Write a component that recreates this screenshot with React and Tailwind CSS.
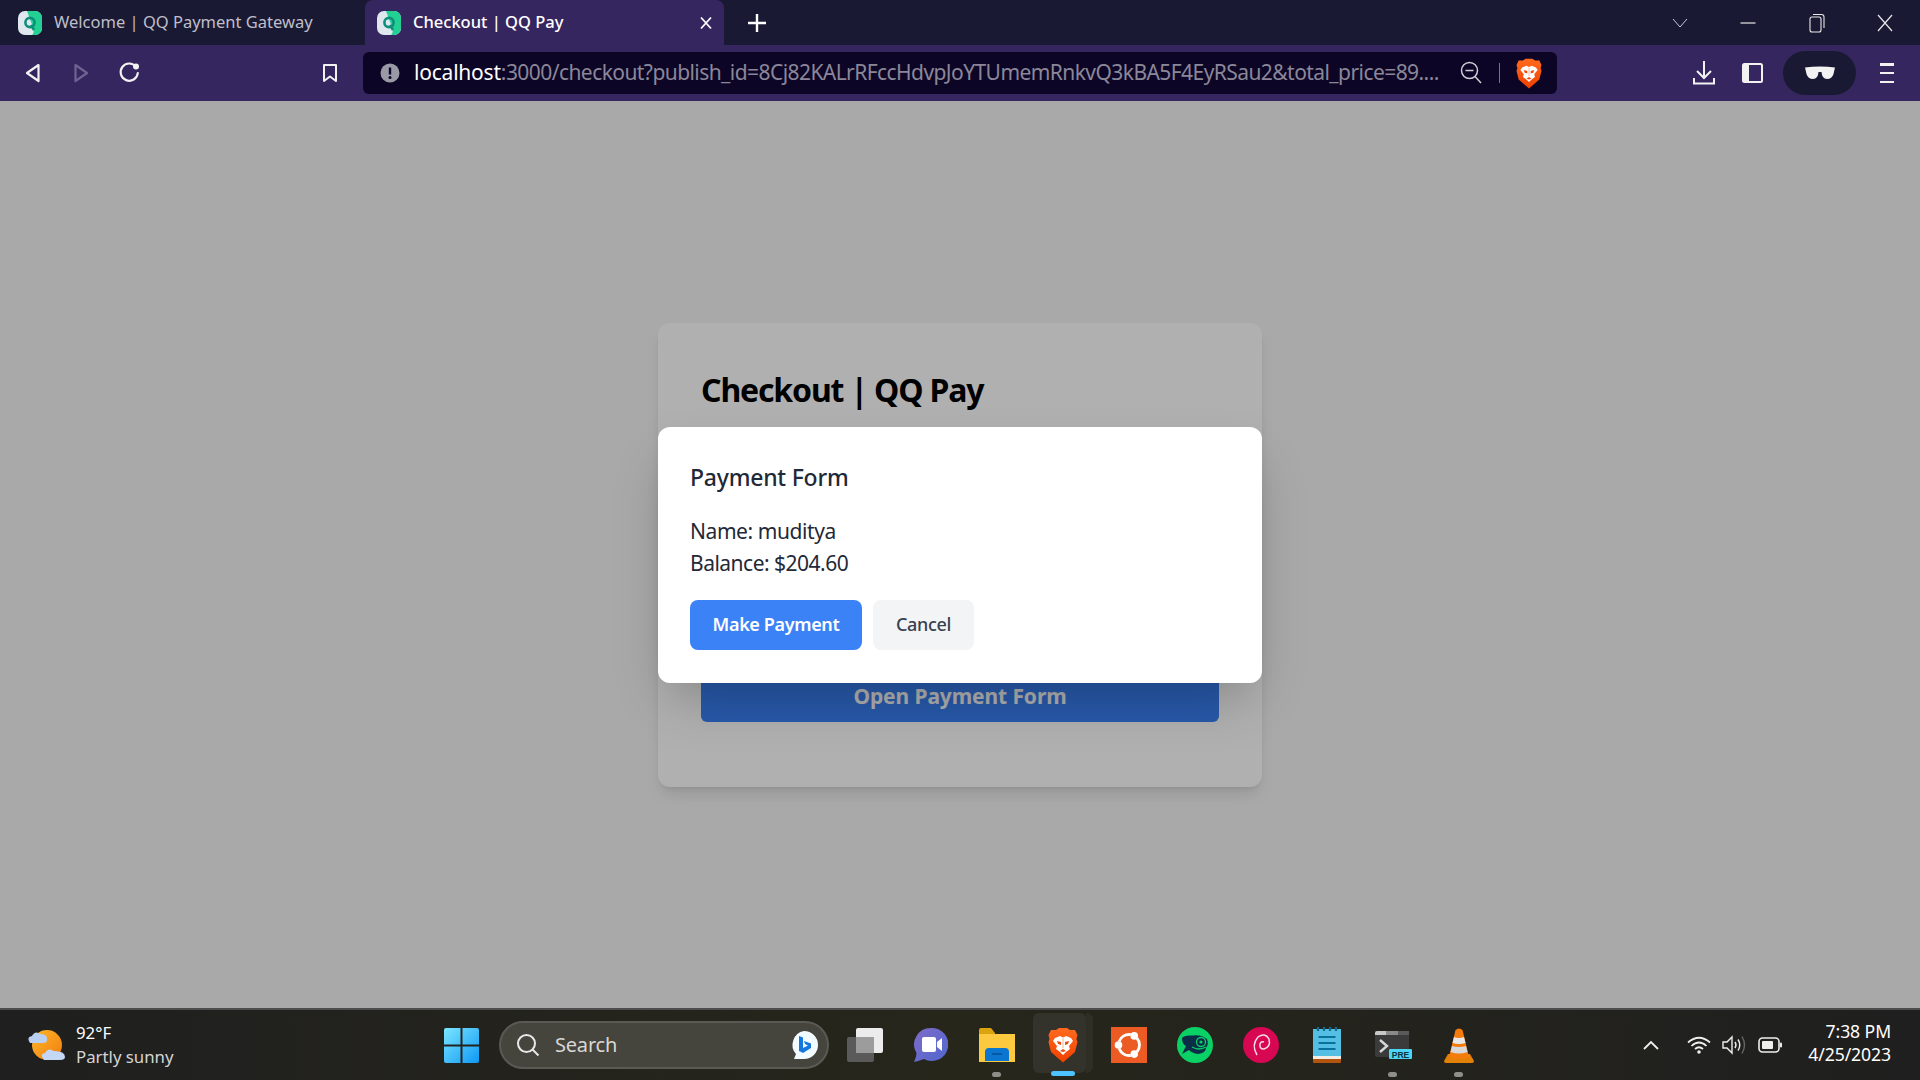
import React from "react";

function Favicon() {
  return (
    <svg width="24" height="24" viewBox="0 0 24 24" className="shrink-0">
      <rect x="0" y="0" width="24" height="24" rx="7" fill="#dfe8ee" />
      <path d="M9 0H17A7 7 0 0 1 24 7V17A7 7 0 0 1 17 24H14C18 21 14 14 12 8Z" fill="#21d092" />
      <circle cx="12" cy="11.5" r="4.6" fill="none" stroke="#0e8f79" strokeWidth="2.6" />
      <path d="M13 14L16 19" stroke="#0e8f79" strokeWidth="2.6" />
    </svg>
  );
}

function Brave({ w = 26, h = 31 }) {
  return (
    <svg width={w} height={h} viewBox="0 0 30 36" className="shrink-0">
      <defs>
        <linearGradient id="bravegrad" x1="0" y1="0" x2="0" y2="1">
          <stop offset="0" stopColor="#ff6a1f" />
          <stop offset="1" stopColor="#f04000" />
        </linearGradient>
      </defs>
      <path d="M8 3L11 1H19L22 3L27 3L29.5 8L28.5 12L29.5 15L27 25L19 32L15 35.5L11 32L3 25L.5 15L1.5 12L.5 8L3 3Z" fill="url(#bravegrad)" />
      <path d="M7 11L12 9L15 10.5L18 9L23 11L25 14L21 19L22 22L18 25L15 28L12 25L8 22L9 19L5 14Z" fill="#fff" />
      <path d="M9 14L13 15L13 18L10 17ZM21 14L17 15L17 18L20 17ZM12 24L15 22L18 24L15 25Z" fill="#f04a0c" />
      <path d="M15 11V21" stroke="#f6b59c" strokeWidth="1" />
    </svg>
  );
}

function WindowControls() {
  return (
    <div className="ml-auto flex h-full items-center">
      <div className="flex w-[68px] justify-center">
        <svg width="16" height="10" viewBox="0 0 16 10"><path d="M1 1L8 9L15 1" fill="none" stroke="#c8c8d0" strokeWidth="1" /></svg>
      </div>
      <div className="flex w-[68px] justify-center">
        <svg width="16" height="10" viewBox="0 0 16 10"><path d="M0.500 5H15.500" stroke="#e8e8e8" strokeWidth="1.2" /></svg>
      </div>
      <div className="ml-[1px] flex w-[68px] justify-center">
        <svg width="16" height="20" viewBox="0 0 16 20" fill="none" stroke="#e8e8e8" strokeWidth="1.1"><rect x="1" y="4" width="11" height="15" rx="2" /><path d="M4 1.500H12.500A2.500 2.500 0 0 1 15 4V15" /></svg>
      </div>
      <div className="mr-[1px] flex w-[68px] justify-center">
        <svg width="16" height="18" viewBox="0 0 16 18"><path d="M1 1L15 17M15 1L1 17" stroke="#e8e8e8" strokeWidth="1.2" /></svg>
      </div>
    </div>
  );
}

function TabStrip() {
  return (
    <div className="flex h-[45px] shrink-0 items-center bg-[#1a1933] text-[16.5px]">
      <div className="flex h-full w-[365px] items-center pl-[18px]">
        <Favicon />
        <span className="ml-[12px] whitespace-nowrap text-[#bfbfca]">Welcome | QQ Payment Gateway</span>
      </div>
      <div className="flex h-full w-[359px] items-center rounded-t-lg bg-[#35265f] pl-[12px]">
        <Favicon />
        <span className="ml-[12px] whitespace-nowrap font-medium text-white">Checkout | QQ Pay</span>
        <svg className="ml-auto mr-[12px]" width="12" height="14" viewBox="0 0 12 14"><path d="M1 1.500L11 12.500M11 1.500L1 12.500" stroke="#fff" strokeWidth="1.800" /></svg>
      </div>
      <svg className="ml-[24px]" width="18" height="18" viewBox="0 0 18 18"><path d="M9 0V18M0 9H18" stroke="#fff" strokeWidth="2.400" /></svg>
      <WindowControls />
    </div>
  );
}

function Toolbar() {
  const cell = "flex w-[48px] shrink-0 justify-center";
  return (
    <div className="flex h-[56px] shrink-0 items-center bg-[#35265f] pl-[9px]">
      <div className={cell}>
        <svg width="16" height="20" viewBox="0 0 16 20"><path d="M13.500 2L2 10L13.500 18Z" fill="none" stroke="#f2f2f2" strokeWidth="2.200" strokeLinejoin="round" /></svg>
      </div>
      <div className={cell}>
        <svg width="16" height="20" viewBox="0 0 16 20"><path d="M2.500 2L14 10L2.500 18Z" fill="none" stroke="#6e6390" strokeWidth="2.200" strokeLinejoin="round" /></svg>
      </div>
      <div className={cell}>
        <svg width="22" height="22" viewBox="0 0 22 22"><path d="M18 4.800A8.600 8.600 0 1 0 19.800 11" fill="none" stroke="#f2f2f2" strokeWidth="2.200" strokeLinecap="round" /><circle cx="18" cy="4.500" r="3" fill="#f2f2f2" /></svg>
      </div>
      <div className={`${cell} ml-[153px]`}>
        <svg width="16" height="20" viewBox="0 0 16 20"><path d="M2 2H14V18L8 13.500L2 18Z" fill="none" stroke="#f2f2f2" strokeWidth="2" strokeLinejoin="round" /></svg>
      </div>
      <div className="ml-[9px] flex h-[42px] w-[1194px] shrink-0 items-center rounded-md bg-[#0c0526] pl-[17px]">
        <svg width="20" height="20" viewBox="0 0 20 20" className="shrink-0"><circle cx="10" cy="10" r="9.500" fill="#9a9aa6" /><path d="M10 4.500V11.500" stroke="#0c0526" strokeWidth="2.400" /><circle cx="10" cy="14.500" r="1.500" fill="#0c0526" /></svg>
        <div className="ml-[14px] w-[1046px] shrink-0 whitespace-nowrap text-[21px] tracking-[-0.01em] text-[#8b8799]">
          <span className="text-white">localhost</span><span className="tracking-[-0.027em]">:3000/checkout?publish_id=8Cj82KALrRFccHdvpJoYTUmemRnkvQ3kBA5F4EyRSau2&amp;total_price=89....</span>
        </div>
        <svg width="22" height="24" viewBox="0 0 22 24" className="shrink-0"><circle cx="9.500" cy="9.500" r="8" fill="none" stroke="#cfcfd6" strokeWidth="1.500" /><path d="M5.500 9.500H13.500M15 15.500L21 22" stroke="#cfcfd6" strokeWidth="1.500" /></svg>
        <div className="ml-[17px] h-[20px] w-px shrink-0 bg-[#77738a]" />
        <div className="ml-[16px] flex shrink-0"><Brave /></div>
      </div>
      <div className={`${cell} ml-[123px]`}>
        <svg width="24" height="26" viewBox="0 0 24 26" fill="none" stroke="#f2f2f2" strokeWidth="2"><path d="M12 1V17M5 11L12 18L19 11M2 18V23.500H22V18" /></svg>
      </div>
      <div className={cell}>
        <svg width="21" height="20" viewBox="0 0 21 20"><rect x="1" y="1" width="19" height="18" rx="1.500" fill="none" stroke="#f2f2f2" strokeWidth="2" /><rect x="1" y="1" width="6" height="18" fill="#f2f2f2" /></svg>
      </div>
      <div className="ml-[7px] flex h-[44px] w-[73px] shrink-0 items-center justify-center rounded-[22px] bg-[#1a1933]">
        <svg width="30" height="14" viewBox="0 0 30 14"><path d="M0 1.500Q15 -0.500 30 1.500L28.500 8Q27 13 22 13Q17 13 16.500 6H13.500Q13 13 8 13Q3 13 1.500 8Z" fill="#f2f2f2" /></svg>
      </div>
      <div className="ml-[1px] flex w-[60px] shrink-0 justify-center">
        <div className="flex h-[20px] w-[14px] flex-col justify-between">
          <div className="h-[2.500px] bg-[#f2f2f2]" />
          <div className="h-[2.500px] bg-[#f2f2f2]" />
          <div className="h-[2.500px] bg-[#f2f2f2]" />
        </div>
      </div>
    </div>
  );
}

function Page() {
  return (
    <div className="relative flex flex-1 items-center justify-center bg-[#f5f5f6]">
      <div className="flex h-[464px] w-[604px] flex-col justify-between rounded-xl bg-white px-[43px] pb-[65px] pt-[45px] shadow-lg">
        <h1 className="text-[32px] font-bold leading-[44px] tracking-[-0.036em] text-black">Checkout | QQ Pay</h1>
        <button className="h-[50px] w-full rounded-md bg-[#3b82f6] text-[21px] font-bold tracking-[-0.005em] text-white">Open Payment Form</button>
      </div>
      <div className="absolute inset-0 flex items-center justify-center bg-black/[0.31]">
        <div className="flex h-[256px] w-[604px] flex-col rounded-xl bg-white px-[32px] pb-[30px] pt-[34px] shadow-2xl">
          <h2 className="text-[23px] font-medium leading-[32px] tracking-[-0.01em] text-[#1f2937]">Payment Form</h2>
          <p className="mt-[22px] text-[21px] leading-[32px] tracking-[-0.02em] text-[#1f2937]">Name: muditya</p>
          <p className="text-[21px] leading-[32px] tracking-[-0.024em] text-[#1f2937]">Balance: $204.60</p>
          <div className="mt-[21px] flex gap-[11px]">
            <button className="h-[50px] w-[172px] rounded-lg bg-[#3b82f6] text-[18px] font-semibold tracking-[-0.02em] text-white">Make Payment</button>
            <button className="h-[50px] w-[101px] rounded-lg bg-[#f3f4f6] text-[18px] font-medium tracking-[-0.02em] text-[#374151]">Cancel</button>
          </div>
        </div>
      </div>
    </div>
  );
}

function Dock({ children, dot, active }) {
  return (
    <div className="relative flex h-[58px] w-[66px] shrink-0 items-center justify-center">
      {active && <div className="absolute left-[3px] top-[-3px] h-[60px] w-[60px] rounded-[6px] border-r-[7px] border-[#2e2e25]"><div className="h-full w-full rounded-[6px] bg-[#33332b]" /></div>}
      <div className="relative flex">{children}</div>
      {dot && <div className="absolute bottom-[-3px] left-[28px] h-[5px] w-[9px] rounded-full bg-[#8f8f8a]" />}
      {active && <div className="absolute bottom-[-2px] left-[21px] h-[5px] w-[24px] rounded-full bg-[#4cc2ff]" />}
    </div>
  );
}

function Taskbar() {
  return (
    <div className="flex h-[72px] shrink-0 items-center border-t-2 border-[#4d4d4d] bg-linear-to-r from-[#1f1f1f] via-[#27261b] to-[#1f1f1f] text-white">
      <svg width="39" height="36" viewBox="0 0 39 36" className="ml-[27px] shrink-0">
        <defs>
          <linearGradient id="sun" x1="0" y1="0" x2="1" y2="1"><stop offset="0" stopColor="#ffb72b" /><stop offset="1" stopColor="#ef7d0f" /></linearGradient>
        </defs>
        <circle cx="20" cy="18" r="15" fill="url(#sun)" />
        <path d="M3 16Q-1 10 5 9Q8 3 13 7Q21 7 20 13Q20 16 16 16Z" fill="#b9d0f2" />
        <path d="M17 33Q12 27 18 26Q21 20 27 24Q38 24 38 30Q38 33 33 33Z" fill="#c4d8f6" />
      </svg>
      <div className="ml-[10px] flex w-[368px] shrink-0 flex-col text-[16.8px] leading-[24px]">
        <span>92°F</span>
        <span className="text-[#d5d5d5]">Partly sunny</span>
      </div>
      <svg width="35" height="35" viewBox="0 0 35 35" className="shrink-0">
        <defs>
          <linearGradient id="winlogo" x1="0" y1="0" x2="1" y2="1"><stop offset="0" stopColor="#7be6ff" /><stop offset="1" stopColor="#0e98f4" /></linearGradient>
        </defs>
        <path d="M0 2A2 2 0 0 1 2 0H16.500V16.500H0ZM18.500 0H33A2 2 0 0 1 35 2V16.500H18.500ZM0 18.500H16.500V35H2A2 2 0 0 1 0 33ZM18.500 18.500H35V33A2 2 0 0 1 33 35H18.500Z" fill="url(#winlogo)" />
      </svg>
      <div className="ml-[20px] flex h-[48px] w-[330px] shrink-0 items-center rounded-full border-2 border-[#5a5a54] bg-[#45453e] pl-[15px]">
        <svg width="24" height="24" viewBox="0 0 24 24" className="shrink-0"><circle cx="10.500" cy="10.500" r="8.500" fill="none" stroke="#e8e8e8" strokeWidth="2" /><path d="M16.500 16.500L22.500 22.500" stroke="#e8e8e8" strokeWidth="2" /></svg>
        <span className="ml-[15px] text-[20px] tracking-[-0.01em] text-[#d8d8d4]">Search</span>
        <svg width="30" height="30" viewBox="0 0 30 30" className="ml-auto mr-[8px] shrink-0">
          <path d="M15 1A14 14 0 0 1 15 29H5L7 24A14 14 0 0 1 15 1Z" fill="#f2fbff" />
          <path d="M10 6L14 7.500V18L19 15.500L16 14L15 11L22 13.500V18L14 23L10 21Z" fill="#1478df" />
        </svg>
      </div>
      <div className="ml-[3px] flex shrink-0 items-center">
        <Dock>
          <svg width="36" height="34" viewBox="0 0 36 34"><rect x="0" y="9" width="27" height="25" rx="2" fill="#5a5a5a" /><rect x="9" y="0" width="27" height="25" rx="2" fill="#ececec" /><rect x="9" y="9" width="18" height="16" fill="#9c9c9c" /></svg>
        </Dock>
        <Dock>
          <svg width="34" height="36" viewBox="0 0 34 36">
            <defs><linearGradient id="meet" x1="0" y1="0" x2="1" y2="1"><stop offset="0" stopColor="#7f6bc8" /><stop offset="1" stopColor="#5067cf" /></linearGradient></defs>
            <path d="M17 1A16.500 16.500 0 1 1 10 32Q5 34 0 35Q2.500 30 2.500 26A16.500 16.500 0 0 1 17 1Z" fill="url(#meet)" />
            <rect x="8" y="10" width="14" height="15" rx="2" fill="#fff" />
            <path d="M23 15L28 11V24L23 20Z" fill="#fff" />
          </svg>
        </Dock>
        <Dock dot>
          <svg width="36" height="34" viewBox="0 0 36 34">
            <path d="M0 2A2 2 0 0 1 2 0H12L16 5V10H0Z" fill="#dba40e" />
            <path d="M0 6H36V34H0Z" fill="#fdc93f" />
            <path d="M6 33V24A4 4 0 0 1 10 20H26A4 4 0 0 1 30 24V33Z" fill="#0a76d0" />
            <path d="M13 26H23" stroke="#044f94" strokeWidth="1.500" />
          </svg>
        </Dock>
        <Dock active>
          <Brave w={30} h={36} />
        </Dock>
        <Dock>
          <svg width="36" height="36" viewBox="0 0 36 36">
            <rect width="36" height="36" fill="#ec5b23" />
            <path d="M26.040 11.250A10.500 10.500 0 0 1 26.040 24.750M19.820 28.340A10.500 10.500 0 0 1 8.130 21.590M8.130 14.410A10.500 10.500 0 0 1 19.820 7.660" fill="none" stroke="#fff" strokeWidth="2.800" />
            <circle cx="23.250" cy="8.900" r="3.800" fill="#fff" />
            <circle cx="7.500" cy="18" r="3.800" fill="#fff" />
            <circle cx="23.250" cy="27.100" r="3.800" fill="#fff" />
          </svg>
        </Dock>
        <Dock>
          <svg width="36" height="36" viewBox="0 0 36 36">
            <circle cx="18" cy="18" r="18" fill="#0ad165" />
            <path d="M5 11Q7 8 15 8.500Q24 7 30 12Q32 17 29 21Q29 26 21 27Q15 26 12 23L5 27L9 19Q5 17 5 11Z" fill="#0c2d48" />
            <circle cx="24" cy="15" r="4.500" fill="none" stroke="#0ad165" strokeWidth="1.300" />
            <circle cx="24" cy="15" r="1.600" fill="#0ad165" />
            <path d="M15 20Q22 24 29 20" fill="none" stroke="#0ad165" strokeWidth="1.300" />
          </svg>
        </Dock>
        <Dock>
          <svg width="36" height="36" viewBox="0 0 36 36">
            <circle cx="18" cy="18" r="18" fill="#d70751" />
            <path d="M14 28Q8 18 15 10Q22 5 26 12Q28 20 21 22Q16 22 17 17Q18 14 21 15" fill="none" stroke="#f7dbe5" strokeWidth="1.500" />
          </svg>
        </Dock>
        <Dock>
          <svg width="28" height="36" viewBox="0 0 28 36">
            <rect x="0" y="2" width="28" height="29" fill="#55bfe3" />
            <rect x="0" y="29" width="28" height="3" fill="#f0ede4" />
            <path d="M0 32H28V35Q28 36 27 36H1Q0 36 0 35Z" fill="#b25310" />
            <path d="M5 0V4M11 0V4M17 0V4M23 0V4" stroke="#0e6c94" strokeWidth="2.200" />
            <path d="M5.500 10H22.500M5.500 16H22.500M5.500 22H22.500" stroke="#0b6f9e" strokeWidth="2" />
          </svg>
        </Dock>
        <Dock dot>
          <svg width="37" height="28" viewBox="0 0 37 28">
            <rect x="0" y="0" width="34" height="26" rx="2" fill="#3b3b3b" />
            <path d="M0 2A2 2 0 0 1 2 0H11V4H0Z" fill="#c8c8c8" />
            <rect x="11" y="0" width="12" height="4" fill="#8a8a8a" />
            <rect x="23" y="0" width="11" height="4" fill="#5a5a5a" />
            <path d="M5 9L12 15L5 21" fill="none" stroke="#d8d8d8" strokeWidth="2.400" />
            <rect x="14" y="18" width="23" height="10" rx="1" fill="#4ad6f4" />
            <text x="25.500" y="26.500" textAnchor="middle" fontSize="8.500" fontWeight="700" fill="#0d3445" fontFamily="'Liberation Sans', sans-serif">PRE</text>
          </svg>
        </Dock>
        <Dock dot>
          <svg width="30" height="35" viewBox="0 0 30 35">
            <path d="M4 26H26L30 33Q30 35 28 35H2Q0 35 0 33Z" fill="#e28008" />
            <path d="M11.500 2Q15 -1 18.500 2L25 29Q15 32 5 29Z" fill="#f57c0c" />
            <path d="M10 9Q15 11 20 9L21.500 15Q15 17 8.500 15Z" fill="#e8e8e8" />
            <path d="M8 18Q15 20 22 18L23.500 24Q15 27 6.500 24Z" fill="#d8d8d8" />
          </svg>
        </Dock>
      </div>
      <svg width="16" height="10" viewBox="0 0 16 10" className="ml-[151px] shrink-0"><path d="M1 9L8 2L15 9" fill="none" stroke="#eee" strokeWidth="1.800" /></svg>
      <svg width="24" height="18" viewBox="0 0 24 18" className="ml-[28px] shrink-0" fill="none" stroke="#eee" strokeWidth="1.700"><path d="M1 6.500Q12 -3 23 6.500M4.500 10Q12 3 19.500 10M8 13Q12 9.500 16 13" /><circle cx="12" cy="16" r="1.800" fill="#eee" stroke="none" /></svg>
      <svg width="24" height="20" viewBox="0 0 24 20" className="ml-[11px] shrink-0" fill="none" stroke="#eee" strokeWidth="1.400"><path d="M1 7H5L10 2V18L5 13H1Z" /><path d="M13 7Q15 10 13 13M16 4.500Q19.500 10 16 15.500" /><path d="M20 1.500Q25 10 20 18.500" stroke="#666" /></svg>
      <svg width="24" height="16" viewBox="0 0 24 16" className="ml-[12px] shrink-0"><rect x="1" y="1" width="20" height="14" rx="3.500" fill="none" stroke="#eee" strokeWidth="1.600" /><rect x="4" y="4" width="11" height="8" rx="1" fill="#eee" /><rect x="22" y="5.500" width="2" height="5" rx="1" fill="#eee" /></svg>
      <div className="ml-auto mr-[29px] flex shrink-0 flex-col items-end pb-[4px] text-[17.6px] leading-[23px] tracking-[-0.005em]">
        <span>7:38 PM</span>
        <span>4/25/2023</span>
      </div>
    </div>
  );
}

export default function App() {
  return (
    <div className="flex h-screen w-full flex-col overflow-hidden font-['Noto_Sans',sans-serif]">
      <TabStrip />
      <Toolbar />
      <Page />
      <Taskbar />
    </div>
  );
}
